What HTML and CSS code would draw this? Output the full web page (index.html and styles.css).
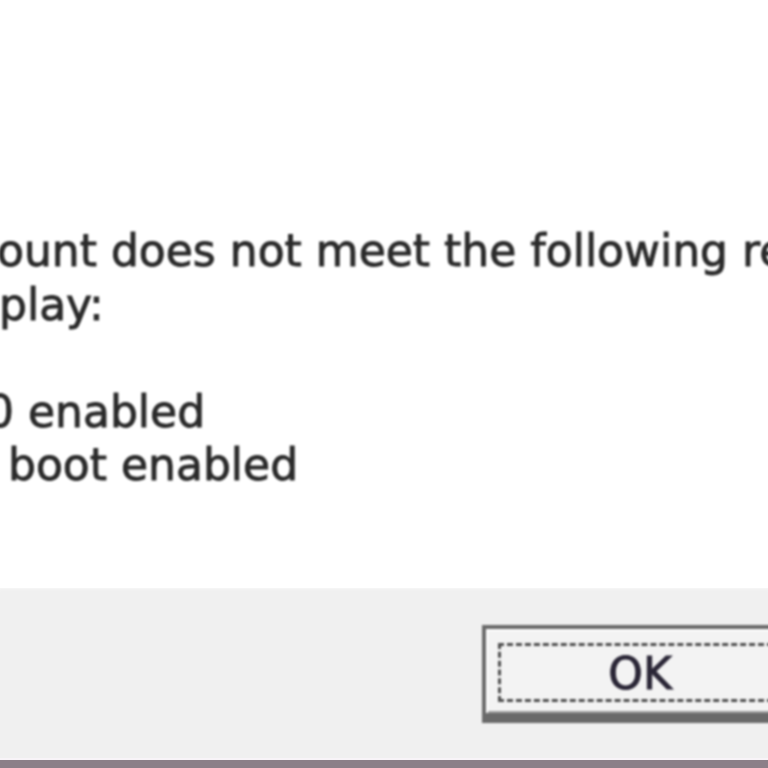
FILE: index.html
```html
<!DOCTYPE html>
<html>
<head>
<meta charset="utf-8">
<link rel="stylesheet" href="styles.css">
</head>
<body>
<div class="dialog">
  <div class="content">
    <div class="line l1">ount does not meet the following requirements</div>
    <div class="line l2">play:</div>
    <div class="line blank">&nbsp;</div>
    <div class="line l3">0 enabled</div>
    <div class="line l4">boot enabled</div>
  </div>
  <div class="footer">
    <div class="button">
      <span class="focus">OK</span>
    </div>
  </div>
  <div class="bar"></div>
</div>
</body>
</html>
```
FILE: styles.css
```css
html, body {
  margin: 0;
  padding: 0;
  width: 768px;
  height: 768px;
  overflow: hidden;
  background: #ffffff;
}
.dialog {
  display: flex;
  flex-direction: column;
  width: 768px;
  height: 768px;
  font-family: "DejaVu Sans", Verdana, sans-serif;
  color: #2a2a2a;
}
.content {
  height: 588px;
  box-sizing: border-box;
  padding-top: 224px;
  background: #ffffff;
  overflow: hidden;
}
.line {
  font-size: 44px;
  line-height: 53.5px;
  white-space: nowrap;
  -webkit-text-stroke: 0.9px #2a2a2a;
  filter: blur(1px);
}
.l1 { text-indent: -3px; }
.l2 { text-indent: -1px; }
.l3 { text-indent: -14px; }
.l4 { text-indent: 8px; }
.footer {
  height: 170px;
  box-sizing: border-box;
  padding-top: 37px;
  padding-left: 482px;
  background: #f0f0f0;
  overflow: hidden;
  box-shadow: inset 0 3px 3px -2px #f7f7f7;
}
.button {
  width: 316px;
  height: 98px;
  box-sizing: border-box;
  display: flex;
  border-style: solid;
  border-color: #6a6a6a;
  border-width: 4px 4px 10px 4px;
  background: #f3f3f3;
  box-shadow: inset 2px 2px 0 #ffffff, inset -2px -2px 0 #a0a0a0;
  padding: 14px 12px 11px 12px;
  filter: blur(0.9px);
}
.focus {
  flex: 1;
  display: flex;
  align-items: center;
  justify-content: center;
  border: 3px dashed #4e4e4e;
  font-size: 44px;
  color: #2a2636;
  -webkit-text-stroke: 1px #2a2636;
  padding-top: 2px;
}
.bar {
  height: 10px;
  background: #8b7f88;
  border-top: 2px solid #f8f4f8;
  box-sizing: border-box;
}
```
